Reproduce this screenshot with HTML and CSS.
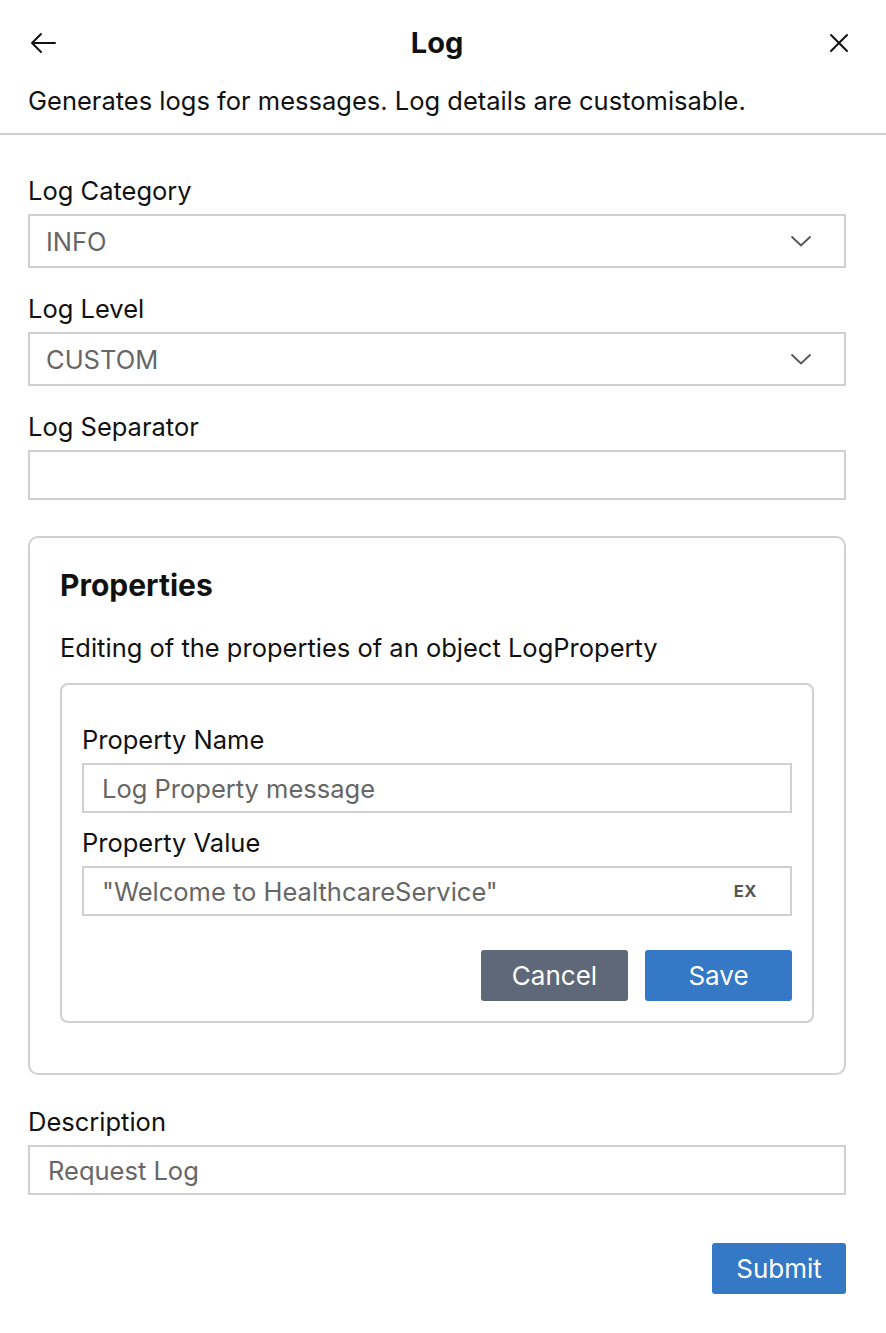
FILE: index.html
```html
<!DOCTYPE html>
<html lang="en">
<head>
<meta charset="utf-8">
<title>Log</title>
<link rel="stylesheet" href="styles.css">
</head>
<body>
<div class="panel">
  <header class="header">
    <div class="topbar">
      <button class="icon-btn back" aria-label="Back">
        <svg width="28" height="24" viewBox="0 0 28 24"><path d="M26 12H3M12 3L3 12l9 9" fill="none" stroke="#111" stroke-width="2" stroke-linecap="round" stroke-linejoin="round"/></svg>
      </button>
      <h1 class="title">Log</h1>
      <button class="icon-btn close" aria-label="Close">
        <svg width="20" height="20" viewBox="0 0 20 20"><path d="M2 2l16 16M18 2L2 18" fill="none" stroke="#111" stroke-width="2" stroke-linecap="round"/></svg>
      </button>
    </div>
    <p class="subtitle">Generates logs for messages. Log details are customisable.</p>
  </header>

  <main class="form">
    <div class="field">
      <label class="label">Log Category</label>
      <div class="control select"><span class="value">INFO</span>
        <svg class="chev" width="22" height="12" viewBox="0 0 22 12"><path d="M1.5 1.5l9.5 9 9.5-9" fill="none" stroke="#555" stroke-width="1.8"/></svg>
      </div>
    </div>
    <div class="field">
      <label class="label">Log Level</label>
      <div class="control select"><span class="value">CUSTOM</span>
        <svg class="chev" width="22" height="12" viewBox="0 0 22 12"><path d="M1.5 1.5l9.5 9 9.5-9" fill="none" stroke="#555" stroke-width="1.8"/></svg>
      </div>
    </div>
    <div class="field">
      <label class="label">Log Separator</label>
      <div class="control input"></div>
    </div>

    <section class="card">
      <h2 class="card-title">Properties</h2>
      <p class="card-desc">Editing of the properties of an object LogProperty</p>
      <div class="inner-card">
        <div class="field">
          <label class="label">Property Name</label>
          <div class="control input"><span class="value">Log Property message</span></div>
        </div>
        <div class="field">
          <label class="label">Property Value</label>
          <div class="control input"><span class="value">"Welcome to HealthcareService"</span><span class="ex">EX</span></div>
        </div>
        <div class="actions">
          <button class="btn btn-gray">Cancel</button>
          <button class="btn btn-blue">Save</button>
        </div>
      </div>
    </section>

    <div class="field">
      <label class="label">Description</label>
      <div class="control input"><span class="value">Request Log</span></div>
    </div>

    <div class="submit-row">
      <button class="btn btn-blue submit">Submit</button>
    </div>
  </main>
</div>
</body>
</html>
```

FILE: styles.css
```css
* { box-sizing: border-box; }
html, body { margin: 0; padding: 0; background: #fff; }
body {
  font-family: "Inter", "Helvetica Neue", Arial, sans-serif;
  color: #111;
  width: 886px;
}
.header {
  border-bottom: 2px solid #cfcfcf;
  padding: 0 28px 17px;
}
.topbar {
  display: grid;
  grid-template-columns: 1fr auto 1fr;
  align-items: center;
  height: 86px;
}
.icon-btn {
  background: none;
  border: 0;
  padding: 0;
  display: flex;
  align-items: center;
}
.back { justify-self: start; margin-left: 1px; }
.close { justify-self: end; margin-right: 9px; }
.title {
  margin: 0 12px 0 0;
  font-size: 29px;
  font-weight: 700;
  line-height: 36px;
}
.subtitle {
  margin: 0;
  font-size: 25.5px;
  line-height: 30px;
}
.form {
  padding: 41px 40px 40px 28px;
  display: flex;
  flex-direction: column;
}
.field {
  display: flex;
  flex-direction: column;
  margin-bottom: 26px;
}
.label {
  font-size: 25.5px;
  line-height: 30px;
  margin-bottom: 8px;
}
.control {
  border: 2px solid #d0d0d0;
  background: #fff;
  display: flex;
  align-items: center;
  height: 50px;
  padding: 0 18px;
  font-size: 25.5px;
  color: #666;
}
.select { height: 54px; justify-content: space-between; padding: 0 32px 0 16px; }
.value { white-space: nowrap; }
.inner-card .input { justify-content: space-between; padding-right: 33px; }
.ex {
  font-size: 16.5px;
  font-weight: 700;
  color: #555;
  letter-spacing: 0.5px;
}
.card {
  border: 2px solid #d0d0d0;
  border-radius: 10px;
  padding: 27px 30px 50px 30px;
  margin-top: 10px;
  margin-bottom: 32px;
}
.card-title {
  margin: 0;
  font-size: 30px;
  font-weight: 700;
  line-height: 40px;
}
.card-desc {
  margin: 28px 0 20px;
  font-size: 25.5px;
  line-height: 30px;
}
.inner-card {
  border: 2px solid #d0d0d0;
  border-radius: 8px;
  padding: 40px 20px 20px 20px;
}
.inner-card .field { margin-bottom: 15px; }
.inner-card .field:nth-child(2) { margin-bottom: 34px; }
.actions {
  display: flex;
  justify-content: flex-end;
  gap: 17px;
}
.btn {
  border: 0;
  border-radius: 3px;
  color: #fff;
  font-family: inherit;
  font-size: 26px;
  height: 51px;
  width: 147px;
  cursor: pointer;
}
.btn-gray { background: #5f6878; }
.btn-blue { background: #3578c6; }
.submit-row {
  display: flex;
  justify-content: flex-end;
  margin-top: 22px;
}
.submit { width: 134px; }
```
